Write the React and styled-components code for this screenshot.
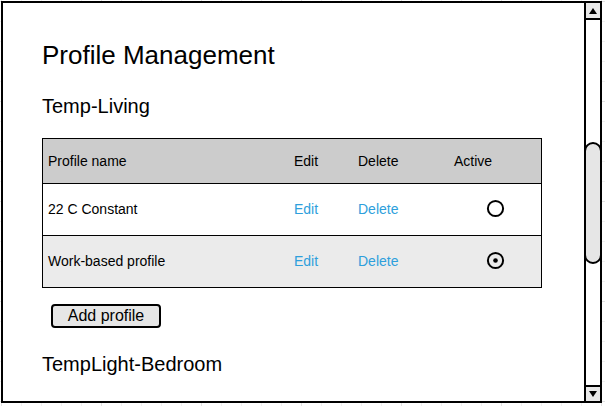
import React from "react";
import styled, { createGlobalStyle } from "styled-components";

const GlobalStyle = createGlobalStyle`
  html, body {
    margin: 0;
    padding: 0;
  }
  body {
    width: 605px;
    height: 406px;
    overflow: hidden;
    font-family: "Liberation Sans", Arial, sans-serif;
    color: #000;
    background-color: #fff;
    background-image:
      linear-gradient(to right, #e2e2e2 1px, transparent 1px),
      linear-gradient(to bottom, #e2e2e2 1px, transparent 1px),
      linear-gradient(to right, #f0f0f0 1px, transparent 1px),
      linear-gradient(to bottom, #f0f0f0 1px, transparent 1px);
    background-size: 100px 100px, 100px 100px, 20px 20px, 20px 20px;
    background-position: 1px 1px, 1px 1px, 1px 1px, 1px 1px;
  }
`;

const rows = [
  { name: "22 C Constant", active: false },
  { name: "Work-based profile", active: true },
];

export default function App() {
  return (
    <>
      <GlobalStyle />
      <Frame>
        <Content>
          <Title>Profile Management</Title>
          <Section>Temp-Living</Section>
          <Table>
            <HeaderRow>
              <Cell>Profile name</Cell>
              <Cell>Edit</Cell>
              <Cell>Delete</Cell>
              <Cell>Active</Cell>
            </HeaderRow>
            {rows.map((r, i) => (
              <Row key={r.name} $shaded={i % 2 === 1}>
                <Cell>{r.name}</Cell>
                <Cell>
                  <LinkText>Edit</LinkText>
                </Cell>
                <Cell>
                  <LinkText>Delete</LinkText>
                </Cell>
                <RadioCell>
                  <Radio active={r.active} />
                </RadioCell>
              </Row>
            ))}
          </Table>
          <AddButton>Add profile</AddButton>
          <Section $gap={24}>TempLight-Bedroom</Section>
        </Content>
        <ScrollBar>
          <ArrowButton $down={false}>
            <Triangle />
          </ArrowButton>
          <Track>
            <Thumb />
          </Track>
          <ArrowButton $down>
            <Triangle $down />
          </ArrowButton>
        </ScrollBar>
      </Frame>
    </>
  );
}

function Radio({ active }) {
  return (
    <svg width="19" height="19" viewBox="0 0 19 19">
      <circle cx="9.5" cy="9.5" r="7.6" fill="none" stroke="#000" strokeWidth="2" />
      {active && <circle cx="9.5" cy="9.5" r="2.3" fill="#000" />}
    </svg>
  );
}

const Frame = styled.div`
  box-sizing: border-box;
  margin: 1px 0 0 1px;
  width: 601px;
  height: 402px;
  border: 2px solid #000;
  background: #fff;
  display: flex;
`;

const Content = styled.div`
  flex: 1;
  min-width: 0;
  padding: 37px 0 0 39px;
  overflow: hidden;
`;

const Title = styled.h1`
  margin: 0;
  font-size: 26px;
  line-height: 30px;
  font-weight: normal;
`;

const Section = styled.h2`
  margin: ${(p) => p.$gap || 24}px 0 0;
  font-size: 20px;
  line-height: 24px;
  font-weight: normal;
`;

const Table = styled.div`
  box-sizing: border-box;
  width: 500px;
  margin-top: 20px;
  border: 1px solid #000;
  font-size: 14px;
`;

const HeaderRow = styled.div`
  display: grid;
  grid-template-columns: 246px 64px 96px 1fr;
  height: 44px;
  background: #cccccc;
`;

const Row = styled.div`
  display: grid;
  grid-template-columns: 246px 64px 96px 1fr;
  box-sizing: border-box;
  height: 52px;
  padding-bottom: 2px;
  border-top: 1px solid #000;
  background: ${(p) => (p.$shaded ? "#ebebeb" : "#fff")};
`;

const Cell = styled.div`
  display: flex;
  align-items: center;
  padding-left: 5px;
`;

const RadioCell = styled.div`
  display: flex;
  align-items: center;
  justify-content: center;
`;

const LinkText = styled.span`
  color: #2e9fdc;
  cursor: pointer;
`;

const AddButton = styled.button`
  display: block;
  box-sizing: border-box;
  margin: 16px 0 0 9px;
  width: 110px;
  height: 24px;
  padding: 0;
  border: 2px solid #000;
  border-radius: 4px;
  background: #e6e6e6;
  font-family: "Liberation Sans", Arial, sans-serif;
  font-size: 16px;
  line-height: 20px;
  color: #000;
`;

const ScrollBar = styled.div`
  width: 14px;
  border-left: 2px solid #000;
  display: flex;
  flex-direction: column;
`;

const ArrowButton = styled.div`
  box-sizing: border-box;
  height: ${(p) => (p.$down ? 16 : 17)}px;
  background: #e8e8e8;
  display: flex;
  align-items: center;
  justify-content: center;
  ${(p) =>
    p.$down ? "border-top: 2px solid #000;" : "border-bottom: 2px solid #000;"}
`;

const Triangle = styled.div`
  width: 0;
  height: 0;
  border-left: 4px solid transparent;
  border-right: 4px solid transparent;
  ${(p) =>
    p.$down ? "border-top: 6px solid #000;" : "border-bottom: 6px solid #000;"}
`;

const Track = styled.div`
  flex: 1;
  background: #fff;
`;

const Thumb = styled.div`
  box-sizing: border-box;
  margin: 122px -2px 0;
  height: 122px;
  border: 2px solid #000;
  border-radius: 9px;
  background: #e6e6e6;
`;
